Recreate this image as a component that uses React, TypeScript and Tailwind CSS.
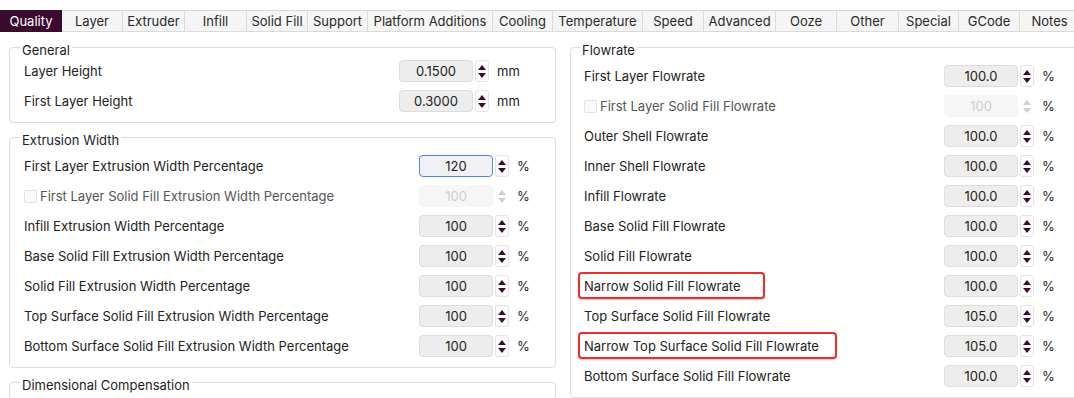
import React from "react";

type RowDef = {
  label: string;
  value: string;
  unit: string;
  disabled?: boolean;
  checkbox?: boolean;
  focused?: boolean;
  mark?: number;
};

const tabs: [string, number][] = [
  ["Quality", 62],
  ["Layer", 61],
  ["Extruder", 62],
  ["Infill", 62],
  ["Solid Fill", 61],
  ["Support", 60],
  ["Platform Additions", 125],
  ["Cooling", 60],
  ["Temperature", 90],
  ["Speed", 61],
  ["Advanced", 72],
  ["Ooze", 61],
  ["Other", 62],
  ["Special", 60],
  ["GCode", 61],
  ["Notes", 60],
];

function Arrows({ disabled }: { disabled?: boolean }) {
  const c = disabled ? "#cfcfcf" : "#3d0b32";
  return (
    <div
      className={
        "ml-[2px] h-[22px] w-[14px] flex flex-col items-center justify-center gap-[3px] rounded-[3px] " +
        (disabled ? "" : "border border-[#e3e3e3] bg-white")
      }
    >
      <svg width="8" height="5" viewBox="0 0 8 5">
        <path d="M4 0 L8 5 L0 5 Z" fill={c} />
      </svg>
      <svg width="8" height="5" viewBox="0 0 8 5">
        <path d="M0 0 L8 0 L4 5 Z" fill={c} />
      </svg>
    </div>
  );
}

function Spin({ value, disabled, focused }: { value: string; disabled?: boolean; focused?: boolean }) {
  let box = "bg-[#ededed] border border-[#dddddd]";
  if (disabled) box = "bg-[#f6f6f6] border border-[#f6f6f6] text-[#cfcfcf]";
  if (focused) box = "bg-[#f1f1f4] border border-[#4f87ef]";
  return (
    <div className="flex items-center h-[22px] w-[90px] shrink-0">
      <div className={"h-[22px] w-[74px] rounded-[4px] flex items-center justify-center " + box}>{value}</div>
      <Arrows disabled={disabled} />
    </div>
  );
}

function Row({ r }: { r: RowDef }) {
  return (
    <div className="h-[30px] flex items-center">
      <div className="flex-1 flex items-center min-w-0">
        {r.checkbox && (
          <span className="w-[13px] h-[13px] mr-[3px] rounded-[2px] border border-[#e2e2e2] bg-[#fafafa] shrink-0" />
        )}
        <span className={"relative whitespace-nowrap " + (r.checkbox ? "text-[#555]" : "")}>
          {r.label}
          {r.mark && (
            <span
              className="absolute -left-[6px] -top-[6px] h-[27px] rounded-[4px] border-2 border-[#e8302c] shadow-[0_1px_2px_rgba(0,0,0,0.25)]"
              style={{ width: r.mark }}
            />
          )}
        </span>
      </div>
      <Spin value={r.value} disabled={r.disabled} focused={r.focused} />
      <span className="ml-[8px] w-[30px] shrink-0">{r.unit}</span>
    </div>
  );
}

function Group({
  title,
  rows,
  cls,
  children,
}: {
  title: string;
  rows?: RowDef[];
  cls: string;
  children?: React.ReactNode;
}) {
  return (
    <fieldset className={"border border-[#dcdcdc] rounded-[4px] " + cls}>
      <legend className="-ml-[4px] px-[2px] relative top-[3px] text-[#1e1e1e]">{title}</legend>
      {rows?.map((r, i) => (
        <Row key={i} r={r} />
      ))}
      {children}
    </fieldset>
  );
}

const general: RowDef[] = [
  { label: "Layer Height", value: "0.1500", unit: "mm" },
  { label: "First Layer Height", value: "0.3000", unit: "mm" },
];

const extrusion: RowDef[] = [
  { label: "First Layer Extrusion Width Percentage", value: "120", unit: "%", focused: true },
  { label: "First Layer Solid Fill Extrusion Width Percentage", value: "100", unit: "%", disabled: true, checkbox: true },
  { label: "Infill Extrusion Width Percentage", value: "100", unit: "%" },
  { label: "Base Solid Fill Extrusion Width Percentage", value: "100", unit: "%" },
  { label: "Solid Fill Extrusion Width Percentage", value: "100", unit: "%" },
  { label: "Top Surface Solid Fill Extrusion Width Percentage", value: "100", unit: "%" },
  { label: "Bottom Surface Solid Fill Extrusion Width Percentage", value: "100", unit: "%" },
];

const flow: RowDef[] = [
  { label: "First Layer Flowrate", value: "100.0", unit: "%" },
  { label: "First Layer Solid Fill Flowrate", value: "100", unit: "%", disabled: true, checkbox: true },
  { label: "Outer Shell Flowrate", value: "100.0", unit: "%" },
  { label: "Inner Shell Flowrate", value: "100.0", unit: "%" },
  { label: "Infill Flowrate", value: "100.0", unit: "%" },
  { label: "Base Solid Fill Flowrate", value: "100.0", unit: "%" },
  { label: "Solid Fill Flowrate", value: "100.0", unit: "%" },
  { label: "Narrow Solid Fill Flowrate", value: "100.0", unit: "%", mark: 187 },
  { label: "Top Surface Solid Fill Flowrate", value: "105.0", unit: "%" },
  { label: "Narrow Top Surface Solid Fill Flowrate", value: "105.0", unit: "%", mark: 259 },
  { label: "Bottom Surface Solid Fill Flowrate", value: "100.0", unit: "%" },
];

export default function App() {
  return (
    <div className="w-[1074px] h-[398px] overflow-hidden bg-white text-[13px] leading-[16px] text-[#222] font-[Inter,'Liberation_Sans',sans-serif]">
      <div className="pt-[10px] flex">
        {tabs.map(([t, w], i) => (
          <div
            key={t}
            style={{ width: w }}
            className={
              "h-[22px] shrink-0 flex items-center justify-center whitespace-nowrap " +
              (i === 0
                ? "bg-[#3b0a2f] text-white"
                : "bg-[#f5f5f5] border-y border-r border-[#dadada] text-[#2a2a2a]")
            }
          >
            {t}
          </div>
        ))}
      </div>
      <div className="flex pt-[7px] pl-[9px] gap-[14px]">
        <div className="w-[547px] shrink-0 flex flex-col gap-[6px]">
          <Group title="General" rows={general} cls="pl-[14px] pr-[28px] pt-[1px] pb-[6px]" />
          <Group title="Extrusion Width" rows={extrusion} cls="pl-[14px] pr-[8px] pt-[6px] pb-[6px]" />
          <Group title="Dimensional Compensation" cls="pl-[14px] pr-[8px] pt-[7px] pb-[5px] h-[120px]" />
        </div>
        <div className="w-[530px] shrink-0">
          <Group title="Flowrate" rows={flow} cls="pl-[13px] pr-[27px] pt-[6px] pb-[6px]" />
        </div>
      </div>
    </div>
  );
}
